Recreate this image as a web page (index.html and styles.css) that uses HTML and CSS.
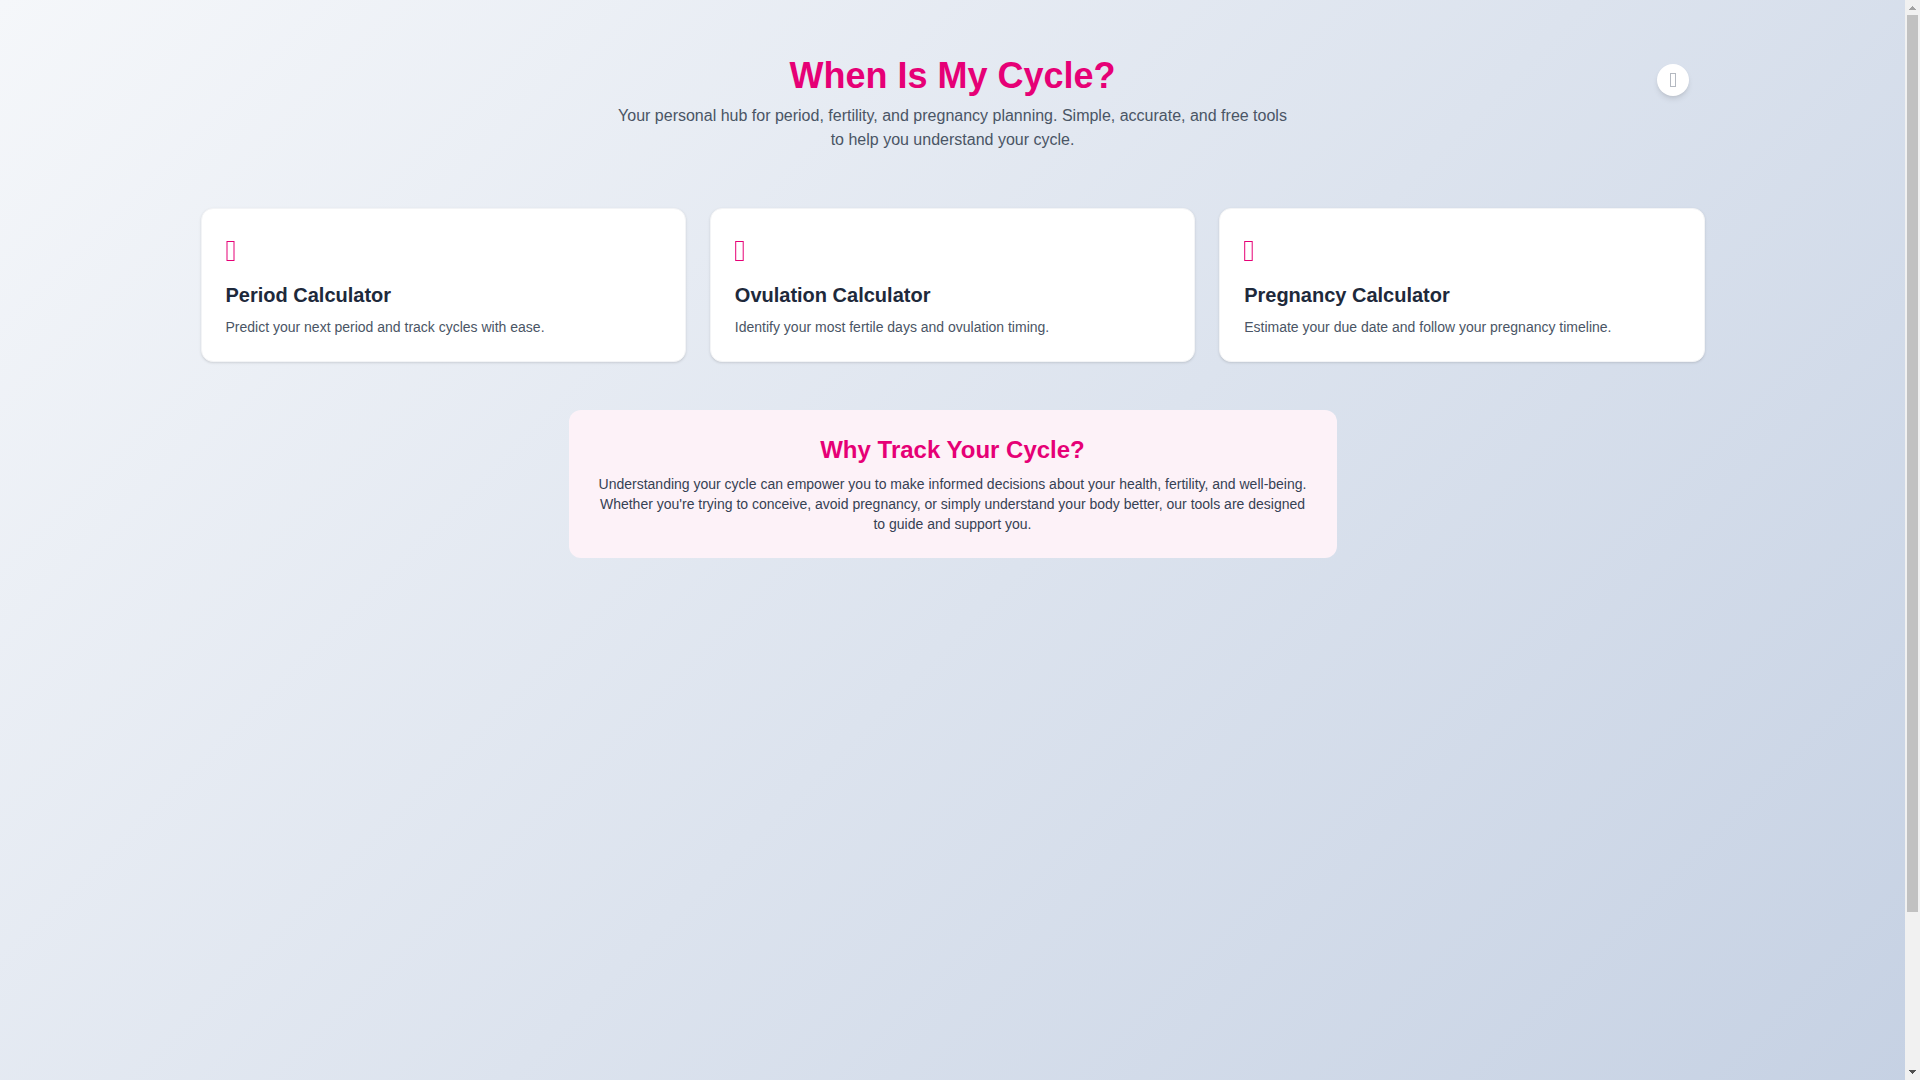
FILE: index.html
```html
<!DOCTYPE html>
<html lang="en">
<head>
    <meta charset="UTF-8">
    <meta name="viewport" content="width=device-width, initial-scale=1.0">
    <title>When Is My Cycle?</title>
    <link rel="stylesheet" href="styles.css">
</head>
<body>
    <div class="viewport">
        <div class="page">
            <div class="container">
                <header class="site-header">
                    <h1>When Is My Cycle?</h1>
                    <p>Your personal hub for period, fertility, and pregnancy planning. Simple, accurate, and free tools to help you understand your cycle.</p>
                    <button type="button" class="theme-toggle" aria-label="Toggle theme">
                        <svg width="6" height="14" viewBox="0 0 6 14" fill="none" stroke="currentColor"><rect x="0.5" y="0.5" width="5" height="13"/></svg>
                    </button>
                </header>

                <main>
                    <div class="card-grid">
                        <a href="#period" class="card">
                            <div class="card-icon">
                                <svg width="9" height="20" viewBox="0 0 9 20" fill="none" stroke="currentColor"><rect x="1" y="0.5" width="7" height="19"/></svg>
                            </div>
                            <h2>Period Calculator</h2>
                            <p>Predict your next period and track cycles with ease.</p>
                        </a>
                        <a href="#ovulation" class="card">
                            <div class="card-icon">
                                <svg width="9" height="20" viewBox="0 0 9 20" fill="none" stroke="currentColor"><rect x="0.7" y="0.5" width="7.5" height="19"/></svg>
                            </div>
                            <h2>Ovulation Calculator</h2>
                            <p>Identify your most fertile days and ovulation timing.</p>
                        </a>
                        <a href="#pregnancy" class="card">
                            <div class="card-icon">
                                <svg width="9" height="20" viewBox="0 0 9 20" fill="none" stroke="currentColor"><rect x="0.7" y="0.5" width="7.5" height="19"/></svg>
                            </div>
                            <h2>Pregnancy Calculator</h2>
                            <p>Estimate your due date and follow your pregnancy timeline.</p>
                        </a>
                    </div>

                    <section class="why">
                        <h2>Why Track Your Cycle?</h2>
                        <p>Understanding your cycle can empower you to make informed decisions about your health, fertility, and well-being. Whether you're trying to conceive, avoid pregnancy, or simply understand your body better, our tools are designed to guide and support you.</p>
                    </section>
                </main>
            </div>
        </div>
    </div>

    <div class="scrollbar" aria-hidden="true">
        <svg class="scroll-arrow scroll-arrow-up" width="15" height="15" viewBox="0 0 15 15" fill="currentColor"><path d="M7 6h1v1h1v1h1v1h1v1H4V9h1V8h1V7h1z"/></svg>
        <div class="scroll-track">
            <div class="scroll-thumb"></div>
        </div>
        <svg class="scroll-arrow" width="15" height="15" viewBox="0 0 15 15" fill="currentColor"><path d="M4 5h7v1h-1v1h-1v1h-1v1H7V8H6V7H5V6H4z"/></svg>
    </div>
</body>
</html>
```

FILE: styles.css
```css
* {
    margin: 0;
    padding: 0;
    box-sizing: border-box;
}

body {
    display: flex;
    height: 100vh;
    overflow: hidden;
    font-family: "Liberation Sans", Arial, sans-serif;
    font-size: 16px;
    line-height: 24px;
    color: #1e293b;
}

.viewport {
    flex: 1;
    min-width: 0;
    overflow: hidden;
}

.page {
    min-height: 117vh;
    background: linear-gradient(135deg, #f5f7fa 0%, #c3cfe2 100%);
}

.container {
    max-width: 1536px;
    margin: 0 auto;
    padding: 32px 16px;
}

.site-header {
    position: relative;
    padding: 24px 16px 8px;
    margin-bottom: 48px;
    text-align: center;
}

.site-header h1 {
    font-size: 36px;
    line-height: 40px;
    color: #e60076;
    margin-bottom: 8px;
}

.site-header p {
    max-width: 672px;
    margin: 0 auto;
    color: #4a5565;
}

.theme-toggle {
    position: absolute;
    top: 32px;
    right: 16px;
    display: flex;
    align-items: center;
    justify-content: center;
    width: 32px;
    height: 32px;
    border: none;
    border-radius: 50%;
    background: white;
    color: #b4b9c1;
    box-shadow: 0 4px 6px -1px rgba(0,0,0,0.1), 0 2px 4px -2px rgba(0,0,0,0.1);
    cursor: pointer;
}

.card-grid {
    display: grid;
    grid-template-columns: repeat(3, 1fr);
    gap: 24px;
}

.card {
    display: block;
    padding: 24px;
    background: white;
    border: 1px solid #f3f4f6;
    border-radius: 12px;
    box-shadow: 0 1px 3px rgba(0,0,0,0.1), 0 1px 2px -1px rgba(0,0,0,0.1);
    color: inherit;
    text-decoration: none;
}

.card:hover {
    box-shadow: 0 4px 6px -1px rgba(0,0,0,0.1);
}

.card-icon {
    display: flex;
    align-items: center;
    height: 36px;
    margin-bottom: 12px;
    color: #e60076;
}

.card h2 {
    font-size: 20px;
    line-height: 28px;
    margin-bottom: 8px;
}

.card p {
    font-size: 14px;
    line-height: 20px;
    color: #4a5565;
}

.why {
    max-width: 768px;
    margin: 48px auto 0;
    padding: 24px;
    background: #fdf2f8;
    border-radius: 12px;
    text-align: center;
}

.why h2 {
    font-size: 24px;
    line-height: 32px;
    color: #e60076;
    margin-bottom: 8px;
}

.why p {
    font-size: 14px;
    line-height: 20px;
    color: #364153;
}

/* Scrollbar */
.scrollbar {
    display: flex;
    flex-direction: column;
    width: 15px;
    background: #f1f1f1;
    color: #505050;
}

.scroll-arrow {
    flex: none;
}

.scroll-arrow-up {
    color: #a3a3a3;
}

.scroll-track {
    flex: 1;
    padding: 0 2px;
}

.scroll-thumb {
    height: 85.4%;
    background: #c1c1c1;
}

@media (max-width: 768px) {
    .card-grid {
        grid-template-columns: 1fr;
    }
}
```
